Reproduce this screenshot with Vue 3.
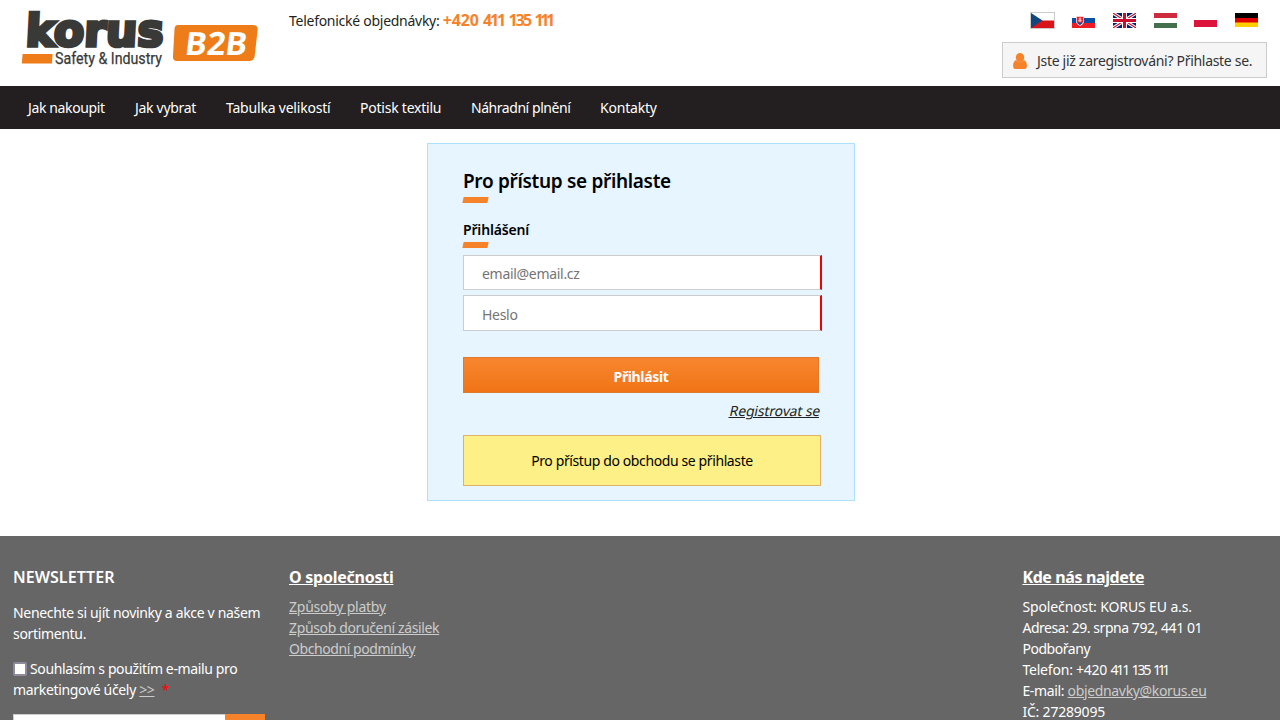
<script setup>
const nav = [
  { t: 'Jak nakoupit', w: 107, s: -0.37 },
  { t: 'Jak vybrat', w: 91, s: -0.3 },
  { t: 'Tabulka velikostí', w: 134, s: -0.2 },
  { t: 'Potisk textilu', w: 111, s: -0.23 },
  { t: 'Náhradní plnění', w: 129, s: -0.45 },
  { t: 'Kontakty', w: 86, s: -0.2 }
]
const links = [
  { t: 'Způsoby platby', s: -0.24 },
  { t: 'Způsob doručení zásilek', s: -0.36 },
  { t: 'Obchodní podmínky', s: -0.43 }
]
</script>

<template>
  <div class="page">
    <header class="header">
      <svg class="logo" width="245" height="66" viewBox="0 0 245 66">
        <g transform="translate(5 41) skewX(-3)" class="word">
          <text x="0" y="0" textLength="138" lengthAdjust="spacingAndGlyphs">korus</text>
        </g>
        <path d="M2.600 49 H32.600 L32 58.500 H1.800 Z" fill="#ee7d19" />
        <text class="sub" x="35" y="58.500" textLength="107" lengthAdjust="spacingAndGlyphs">Safety &amp; Industry</text>
        <path d="M158 20 H233 Q238 20 237.600 25 L234.700 51 Q234 56 229 56 H157 Q152.500 56 153 51 L154.500 24 Q154.800 20 158 20 Z" fill="#ee7d19" />
        <g transform="translate(164 49.700) skewX(-7)"><text class="b2b" x="0" y="0" textLength="62" lengthAdjust="spacingAndGlyphs">B2B</text></g>
      </svg>
      <div class="phone"><span class="phone-label">Telefonické objednávky:</span> <strong>+420 <span class="d411">411</span> <span class="d135">135</span> <span class="d111">111</span></strong></div>
      <div class="right">
        <div class="flags">
          <svg class="cz" viewBox="0 0 23 15"><path fill="#fff" d="M0 0h23v8H0z"/><path fill="#d7141a" d="M0 7.500h23V15H0z"/><path fill="#11457e" d="M0 0l11.500 7.500L0 15z"/></svg>
          <svg class="sk" viewBox="0 0 23 15"><path fill="#fff" d="M0 0h23v5H0z"/><path fill="#0b4ea2" d="M0 5h23v5H0z"/><path fill="#ee1c25" d="M0 10h23v5H0z"/><path fill="#fff" d="M4 3h8v5q0 3-4 5-4-2-4-5z"/><path fill="#ee1c25" d="M4.700 3.700h6.600V8q0 2.500-3.300 4.100Q4.700 10.500 4.700 8z"/><path d="M8 4.500v5M6.700 6h2.600M6.200 7.800h3.600" stroke="#fff" stroke-width=".8"/><path fill="#0b4ea2" d="M5.500 10.200q2.500-1.700 5 0L8 12z"/></svg>
          <svg viewBox="0 0 23 15"><path fill="#012169" d="M0 0h23v15H0z"/><path d="M0 0l23 15M23 0L0 15" stroke="#fff" stroke-width="3.200"/><path d="M0 0l23 15M23 0L0 15" stroke="#c8102e" stroke-width="1.100"/><path d="M11.500 0v15M0 7.500h23" stroke="#fff" stroke-width="5"/><path d="M11.500 0v15M0 7.500h23" stroke="#c8102e" stroke-width="3"/></svg>
          <svg viewBox="0 0 23 15"><path fill="#fff" d="M0 0h23v15H0z"/><path fill="#cd2a3e" d="M0 0h23v5H0z"/><path fill="#436f4d" d="M0 10h23v5H0z"/></svg>
          <svg viewBox="0 0 23 15"><path fill="#fff" d="M0 0h23v15H0z"/><path fill="#dc143c" d="M0 7h23v7H0z"/></svg>
          <svg viewBox="0 0 23 15"><path d="M0 0h23v5H0z"/><path fill="#d00" d="M0 5h23v5H0z"/><path fill="#ffce00" d="M0 9.500h23V14H0z"/></svg>
        </div>
        <a class="account">
          <svg width="14" height="16" viewBox="0 0 14 16"><ellipse cx="7" cy="4.500" rx="4.200" ry="4.500" fill="#f6832a"/><path d="M3.200 7Q7 11.300 10.800 7 13.900 8.200 13.900 12.900 13.800 16 11.300 16H2.700Q.200 16 .100 12.900.100 8.200 3.200 7Z" fill="#f6832a"/></svg>
          <span>Jste již zaregistrováni? Přihlaste se.</span>
        </a>
      </div>
    </header>

    <nav class="nav">
      <a v-for="n in nav" :key="n.t" :style="{ width: n.w + 'px', letterSpacing: n.s + 'px' }">{{ n.t }}</a>
    </nav>

    <main class="card">
      <h1>Pro přístup se přihlaste</h1>
      <i class="bar"></i>
      <h2>Přihlášení</h2>
      <i class="bar"></i>
      <input class="email" type="email" placeholder="email@email.cz" />
      <input class="pass" type="password" placeholder="Heslo" />
      <button>Přihlásit</button>
      <a class="register">Registrovat se</a>
      <div class="notice"><span>Pro přístup do obchodu se přihlaste</span></div>
    </main>

    <footer class="footer">
      <section class="news">
        <h3>NEWSLETTER</h3>
        <p class="n1">Nenechte si ujít novinky a akce v našem<br />sortimentu.</p>
        <p class="n2"><span class="check"></span><span class="agree">Souhlasím s použitím e-mailu pro</span><br /><span class="mk">marketingové účely</span> <a>&gt;&gt;</a> <b>*</b></p>
        <div class="subscribe"><span></span><em></em></div>
      </section>
      <section class="about">
        <h3>O společnosti</h3>
        <a v-for="l in links" :key="l.t" :style="{ letterSpacing: l.s + 'px' }">{{ l.t }}</a>
      </section>
      <section class="where">
        <h3>Kde nás najdete</h3>
        <div class="company">Společnost: KORUS EU a.s.</div>
        <div>Adresa: 29. srpna 792, 441 01</div>
        <div>Podbořany</div>
        <div class="tel"><span class="tel-label">Telefon:</span> +420 <span class="d411">411</span> <span class="d135">135</span> <span class="d111">111</span></div>
        <div class="mail">E-mail: <a>objednavky@korus.eu</a></div>
        <div class="ic">IČ: 27289095</div>
      </section>
    </footer>
  </div>
</template>

<style>
body { margin: 0; background: #fff; overflow: hidden; }
</style>

<style scoped>
.page { width: 1280px; height: 720px; overflow: hidden; font: 14px/21px "Noto Sans", "Open Sans", sans-serif; letter-spacing: -0.45px; color: #231f20; }
.page * { box-sizing: border-box; }
h1, h2, h3, p { margin: 0; }
.header { display: flex; height: 86px; padding-right: 13px; }
.logo { margin: 5px 0 0 20px; flex: none; }
.word { font: 700 44px "DejaVu Sans", sans-serif; fill: #393938; stroke: #393938; stroke-width: 3.5px; stroke-linejoin: miter; letter-spacing: 0; }
.sub { font: 400 16px "Roboto", sans-serif; fill: #393938; stroke: #393938; stroke-width: .25px; letter-spacing: 0; }
.b2b { font: 700 32px "Noto Sans", sans-serif; fill: #fff; letter-spacing: 0; }
.phone { margin: 10px 0 0 24px; flex: 1; white-space: nowrap; }
.phone-label { letter-spacing: -0.27px; }
.phone strong { font-size: 16px; font-weight: 700; color: #f6832a; letter-spacing: -0.1px; }
.d411 { letter-spacing: -2.1px; margin-right: 0.4px; }
.d135 { letter-spacing: -1.9px; margin-right: 0.2px; }
.d111 { letter-spacing: -3.5px; }
.right { width: 265px; }
.flags { display: flex; justify-content: space-between; align-items: center; height: 17px; margin: 12px 9px 0 28px; }
.flags svg { width: 23px; height: 15px; display: block; }
.flags .cz { width: 25px; height: 17px; border: 1px solid #ccc; }
.flags .sk { margin: 0 1px 0 -1px; }
.account { display: flex; align-items: center; height: 36px; margin-top: 13px; border: 1px solid #ccc; background: #f5f5f5; padding-left: 10px; white-space: nowrap; color: #333; letter-spacing: -0.3px; }
.account svg { margin: 1px 10px 0 0; }
.nav { display: flex; height: 43px; padding-left: 28px; background: #231f20; color: #fff; line-height: 43px; white-space: nowrap; }
.nav a { flex: none; }
.card { display: flex; flex-direction: column; align-items: flex-start; width: 428px; height: 358px; margin: 14px 0 0 427px; padding: 23px 33px 0 35px; background: #e6f5ff; border: 1px solid #ade0fb; color: #000; }
h1 { font-size: 19px; font-weight: 600; line-height: 29px; white-space: nowrap; letter-spacing: -0.32px; }
h2 { font-size: 14px; font-weight: 600; line-height: 21px; margin-top: 16px; letter-spacing: -0.17px; }
.bar { width: 25px; height: 6px; background: #f6832a; transform: skewX(-12deg); margin-top: 1px; }
h2 + .bar { margin-top: 2px; }
input { display: block; width: 359px; height: 35px; margin: 7px 0 0; padding: 2px 18px 0; border: 1px solid #ccc; border-right: 2px solid #f00000; border-radius: 0; background: #fff; font: inherit; letter-spacing: -0.3px; }
input::placeholder { color: #757575; opacity: 1; }
.pass { height: 36px; margin-top: 5px; }
button { width: 356px; height: 36px; margin: 26px 0 0; padding: 3px 0 0; border: 1px solid #df7a2d; background: linear-gradient(#f8862e, #f07416); color: #fff; font: 700 14px/21px "Noto Sans", sans-serif; letter-spacing: -0.35px; }
.register { align-self: flex-end; margin: 7px 1px 0 0; text-decoration: underline; color: #231f20; letter-spacing: -0.15px; transform: skewX(-12deg); }
.notice { width: 358px; height: 51px; margin-top: 14px; line-height: 49px; text-align: center; border: 1px solid #dfb16a; background: #fcf087; letter-spacing: -0.39px; }
.footer { display: flex; height: 184px; margin-top: 35px; padding: 30px 0 0 13px; background: #666; color: #fff; white-space: nowrap; overflow: hidden; }
.news { width: 276px; }
.about { width: 733.4px; }
.about a { display: block; width: fit-content; }
.footer a { color: #ccc; text-decoration: underline; }
h3 { font-size: 16px; line-height: 22px; margin-bottom: 8px; font-weight: 700; letter-spacing: -0.25px; }
.about h3, .where h3 { text-decoration: underline; }
.where h3 { letter-spacing: -0.38px; }
.news h3 { margin-bottom: 14px; font-weight: 600; letter-spacing: 0.05px; }
.n1 { letter-spacing: -0.33px; }
.n2 { margin-top: 14px; letter-spacing: -0.37px; }
.mk { letter-spacing: -0.33px; }
.company { letter-spacing: -0.12px; }
.tel { letter-spacing: -0.25px; }
.tel-label { letter-spacing: -0.2px; }
.tel .d411 { letter-spacing: -2.2px; margin-right: 0.2px; }
.tel .d135 { letter-spacing: -2px; margin-right: 0; }
.tel .d111 { letter-spacing: -3.3px; }
.mail { letter-spacing: -0.34px; }
.ic { letter-spacing: -0.2px; }
.check { display: inline-block; width: 14px; height: 14px; border: 2px solid #8f8b9d; border-radius: 2px; background: #fff; margin-right: 3px; vertical-align: -2px; }
.news b { color: #f00; font-weight: 400; margin-left: 4px; }
.subscribe { display: flex; margin-top: 14px; height: 36px; width: 252px; }
.subscribe span { flex: 1; background: #fff; border: 1px solid #ccc; border-right: 0; }
.subscribe em { width: 40px; background: #f6832a; }
</style>
